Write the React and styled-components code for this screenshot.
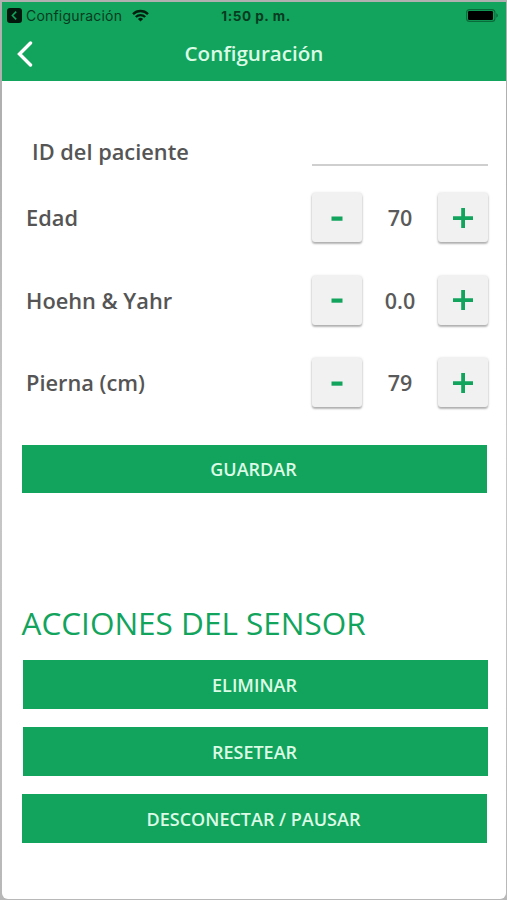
import React, { useState } from "react";
import styled, { createGlobalStyle } from "styled-components";

const GlobalStyle = createGlobalStyle`
  * {
    box-sizing: border-box;
  }

  body {
    margin: 0;
    overflow: hidden;
    background: #b3b3b3;
    font-family: "Open Sans", "Noto Sans", sans-serif;
  }
`;

const Desktop = styled.div`
  height: 900px;
  padding: 2px 1px 1px 2px;
  background: linear-gradient(#b0b0b0 0, #b0b0b0 140px, #c9c9c9 430px, #b8b8b8);
`;

const Screen = styled.div`
  height: 897px;
  background: #fff;
  border-radius: 0 0 6px 6px;
  overflow: hidden;
`;

const Header = styled.header`
  height: 79px;
  background: #12a45d;
`;

const StatusBar = styled.div`
  height: 27px;
  padding: 0 7px 0 5px;
  display: grid;
  grid-template-columns: 1fr auto 1fr;
  align-items: center;
  font-family: Inter, sans-serif;
  color: #073b20;
`;

const BackToApp = styled.div`
  display: flex;
  align-items: center;
  font-size: 14px;
  letter-spacing: 0.2px;
`;

const AppName = styled.span`
  margin: 0 10px 0 4px;
`;

const Clock = styled.div`
  font-size: 13.5px;
  font-weight: 700;
  letter-spacing: 0.55px;
  padding-left: 6px;
`;

const BatterySlot = styled.div`
  display: flex;
  justify-content: flex-end;
`;

const NavBar = styled.div`
  height: 49px;
  padding: 0 15px 0 14px;
  display: grid;
  grid-template-columns: 41px 1fr 40px;
  align-items: center;
`;

const BackButton = styled.button`
  display: flex;
  padding: 1px 0 0;
  border: none;
  background: none;
  cursor: pointer;
`;

const Title = styled.h1`
  margin: 0;
  text-align: center;
  font-size: 20.6px;
  line-height: 29px;
  font-weight: 600;
  color: #dcfbe6;
`;

const Content = styled.main`
  padding: 55px 18px 0 20px;
`;

const Row = styled.div`
  height: ${(props) => props.height || "82.5px"};
  padding-left: ${(props) => props.indent || "4px"};
  display: flex;
  justify-content: space-between;
  align-items: flex-start;
`;

const Label = styled.label`
  font-size: 21.8px;
  line-height: 30px;
  padding-top: ${(props) => props.top || "10px"};
  font-weight: 600;
  color: #555;
`;

const IdInput = styled.input`
  width: 176px;
  height: 30px;
  padding: 0;
  border: none;
  border-bottom: 2px solid #cfcfcf;
  outline: none;
  background: none;
  font: inherit;
`;

const Stepper = styled.div`
  width: 176px;
  display: flex;
  justify-content: space-between;
`;

const StepButton = styled.button`
  width: 50px;
  height: 49px;
  padding: 0;
  display: flex;
  justify-content: center;
  align-items: center;
  border: none;
  border-radius: 3px;
  background: #f1f1f1;
  box-shadow: 0 2px 2px rgba(0, 0, 0, 0.27), 0 0 3px rgba(0, 0, 0, 0.16);
  cursor: pointer;
`;

const Value = styled.span`
  padding-top: 10px;
  font-size: 21.5px;
  line-height: 30px;
  font-weight: 600;
  color: #5a5a5a;
`;

const ActionButton = styled.button`
  display: block;
  width: 465px;
  height: ${(props) => props.height || "49px"};
  margin: 0 0 18px ${(props) => props.shift || "0"};
  padding: 0 2px 0 0;
  border: none;
  background: #12a45d;
  color: #dcfbe6;
  font-family: inherit;
  font-size: 18px;
  font-weight: 600;
  cursor: pointer;
`;

const SectionTitle = styled.h2`
  margin: 108px 0 15px -0.5px;
  font-size: 31.5px;
  line-height: 44px;
  font-weight: 400;
  color: #12a45d;
  white-space: nowrap;
`;

const BackBadge = () => (
  <svg width="15" height="15" viewBox="0 0 15 15">
    <rect width="15" height="15" rx="3" fill="#03180c" />
    <path d="M9.2 3.6 5.4 7.5l3.8 3.9" fill="none" stroke="#12a45d" strokeWidth="1.6" />
  </svg>
);

const Wifi = () => (
  <svg width="17" height="13" viewBox="0 0 17 13">
    <g fill="none" stroke="#03200f" strokeWidth="2.3">
      <path d="M1 5.1a10.6 10.6 0 0 1 15 0" />
      <path d="M3.8 8a6.7 6.7 0 0 1 9.4 0" />
    </g>
    <path d="M8.5 12.6 5.9 10a3.7 3.7 0 0 1 5.2 0z" fill="#03200f" />
  </svg>
);

const Battery = () => (
  <svg width="33" height="13" viewBox="0 0 33 13">
    <rect x="0.6" y="0.6" width="28.3" height="11.8" rx="3" fill="none" stroke="#0a6b3a" strokeWidth="1.1" />
    <rect x="2" y="2" width="25" height="9" rx="1.3" fill="#000" />
    <path d="M30.3 4.3c2 .7 2 3.7 0 4.4z" fill="#0a6b3a" />
  </svg>
);

const Chevron = () => (
  <svg width="17" height="26" viewBox="0 0 17 26">
    <path
      d="M14.5 2 3.5 13l11 11"
      fill="none"
      stroke="#fff"
      strokeWidth="3.4"
      strokeLinecap="round"
    />
  </svg>
);

const StepIcon = ({ plus }) => (
  <svg width="20" height="20" viewBox="0 0 20 20" fill="#12a45d">
    {plus ? (
      <path d="M8.2 0h3.8v8.2h8v3.8h-8v8H8.2v-8H0V8.2h8.2z" />
    ) : (
      <path d="M4.5 8.5h11v4.2h-11z" />
    )}
  </svg>
);

const FIELDS = [
  { name: "edad", label: "Edad", initial: 70, step: 1, digits: 0 },
  { name: "hoehn", label: "Hoehn & Yahr", initial: 0, step: 0.5, digits: 1 },
  { name: "pierna", label: "Pierna (cm)", initial: 79, step: 1, digits: 0 },
];

const StepperRow = ({ field, height }) => {
  const [value, setValue] = useState(field.initial);

  return (
    <Row height={height}>
      <Label>{field.label}</Label>
      <Stepper>
        <StepButton
          aria-label="menos"
          onClick={() => setValue(Math.max(0, value - field.step))}
        >
          <StepIcon />
        </StepButton>
        <Value>{value.toFixed(field.digits)}</Value>
        <StepButton aria-label="más" onClick={() => setValue(value + field.step)}>
          <StepIcon plus />
        </StepButton>
      </Stepper>
    </Row>
  );
};

const App = () => {
  const [patientId, setPatientId] = useState("");

  return (
    <>
      <GlobalStyle />
      <Desktop>
        <Screen>
          <Header>
            <StatusBar>
              <BackToApp>
                <BackBadge />
                <AppName>Configuración</AppName>
                <Wifi />
              </BackToApp>
              <Clock>1:50 p. m.</Clock>
              <BatterySlot>
                <Battery />
              </BatterySlot>
            </StatusBar>
            <NavBar>
              <BackButton aria-label="atrás">
                <Chevron />
              </BackButton>
              <Title>Configuración</Title>
            </NavBar>
          </Header>
          <Content>
            <Row height="57px" indent="10px">
              <Label htmlFor="patient" top="1px">
                ID del paciente
              </Label>
              <IdInput
                id="patient"
                value={patientId}
                onChange={(e) => setPatientId(e.target.value)}
              />
            </Row>
            {FIELDS.map((field, i) => (
              <StepperRow
                key={field.name}
                field={field}
                height={i === FIELDS.length - 1 ? "87px" : undefined}
              />
            ))}
            <ActionButton height="48px">GUARDAR</ActionButton>
            <SectionTitle>ACCIONES DEL SENSOR</SectionTitle>
            <ActionButton shift="1px">ELIMINAR</ActionButton>
            <ActionButton shift="1px">RESETEAR</ActionButton>
            <ActionButton>DESCONECTAR / PAUSAR</ActionButton>
          </Content>
        </Screen>
      </Desktop>
    </>
  );
};

export default App;
